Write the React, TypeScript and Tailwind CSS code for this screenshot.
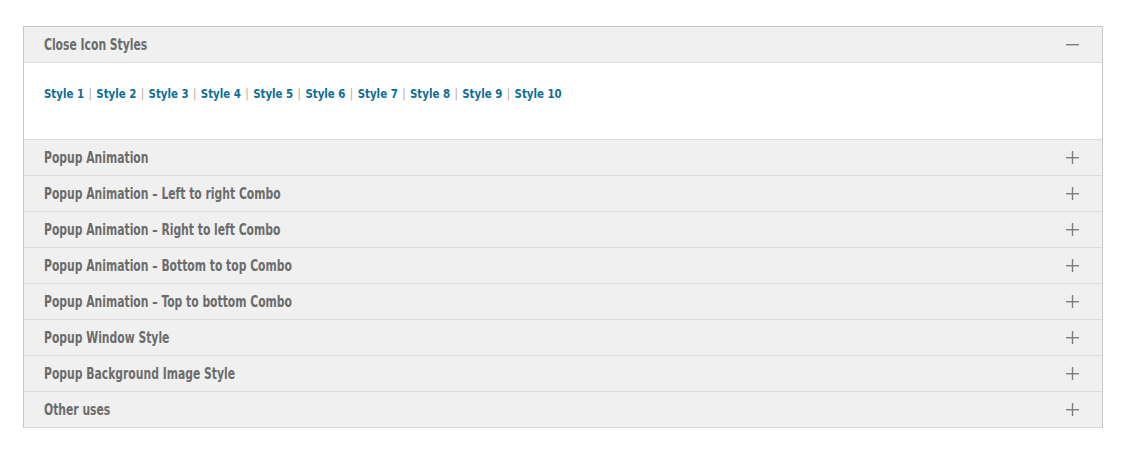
import { useState } from "react";

const sections = [
  "Close Icon Styles",
  "Popup Animation",
  "Popup Animation – Left to right Combo",
  "Popup Animation – Right to left Combo",
  "Popup Animation – Bottom to top Combo",
  "Popup Animation – Top to bottom Combo",
  "Popup Window Style",
  "Popup Background Image Style",
  "Other uses",
];

const styles = Array.from({ length: 10 }, (_, i) => `Style ${i + 1}`);

function Toggle({ open }: { open: boolean }) {
  return (
    <svg width="13" height="13" viewBox="0 0 13 13" className="shrink-0">
      <rect x="0" y="6" width="13" height="1.4" fill="#7d7d7d" />
      {!open && <rect x="5.8" y="0" width="1.4" height="13" fill="#7d7d7d" />}
    </svg>
  );
}

export default function App() {
  const [open, setOpen] = useState(0);

  return (
    <div className="w-[1127px] h-[452px] bg-white pt-[26px] pl-[23px]">
      <div className="w-[1080px] border border-[#c6c6c6] border-b-[#d6d6d6]">
        {sections.map((title, i) => (
          <div key={title} className={i > 0 ? "border-t border-[#dcdcdc]" : ""}>
            <button
              onClick={() => setOpen(open === i ? -1 : i)}
              className="w-full h-[35px] bg-[#f0f0f0] flex items-center justify-between pl-[20px] pr-[23px] text-left"
            >
              <span className="inline-block origin-left scale-x-[0.8] pt-[2px] text-[15px] font-bold text-[#6c6c6c] whitespace-nowrap [font-family:'DejaVu_Sans_Condensed',sans-serif]">
                {title}
              </span>
              <Toggle open={open === i} />
            </button>
            {open === i && i === 0 && (
              <div className="border-t border-[#dcdcdc] h-[77px] bg-white pl-[20px] pt-[17px]">
                <div className="inline-block origin-left scale-x-[0.875] whitespace-nowrap text-[13px] font-bold [font-family:'DejaVu_Sans_Condensed',sans-serif]">
                  {styles.map((s, k) => (
                    <span key={s}>
                      {k > 0 && <span className="text-[#b9a48c] font-normal px-[5px]">|</span>}
                      <a href="#" className="text-[#0d6d97]">{s}</a>
                    </span>
                  ))}
                </div>
              </div>
            )}
          </div>
        ))}
      </div>
    </div>
  );
}
